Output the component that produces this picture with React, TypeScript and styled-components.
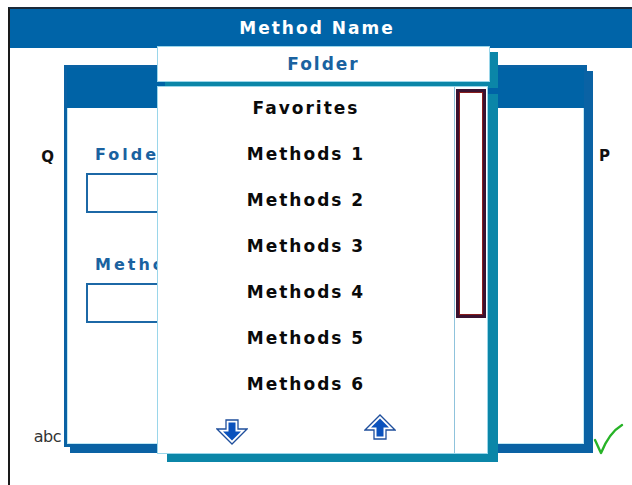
import React from 'react';
import styled, { createGlobalStyle } from 'styled-components';

const FONT = "'DejaVu Sans', Verdana, sans-serif";

const GlobalStyle = createGlobalStyle`
  html, body {
    margin: 0;
    padding: 0;
    background: #ffffff;
  }
`;

const methods = ['Favorites', 'Methods 1', 'Methods 2', 'Methods 3', 'Methods 4', 'Methods 5', 'Methods 6'];

const App: React.FC = () => {
  return (
    <Page>
      <GlobalStyle />
      <Frame>
        <TitleBar>Method Name</TitleBar>
        <Main>
          <SideColumn align="right">
            <SideKey>Q</SideKey>
            <SmallText>abc</SmallText>
          </SideColumn>

          <Dialog>
            <DialogHeader />
            <DialogBody>
              <FieldLabel>Folder</FieldLabel>
              <FieldBox />
              <FieldLabel spaced>Method</FieldLabel>
              <FieldBox />
            </DialogBody>
          </Dialog>

          <SideColumn align="left">
            <SideKey indent>P</SideKey>
            <CheckMark />
          </SideColumn>
        </Main>
      </Frame>

      <Popup>
        <PopupTitle>Folder</PopupTitle>
        <ListBox>
          <ListColumn>
            <Items>
              {methods.map((m) => (
                <Item key={m}>{m}</Item>
              ))}
            </Items>
            <ArrowRow>
              <ArrowCell drop={5}>
                <ArrowIcon direction="down" />
              </ArrowCell>
              <ArrowCell drop={0}>
                <ArrowIcon direction="up" />
              </ArrowCell>
            </ArrowRow>
          </ListColumn>
          <ScrollColumn>
            <ScrollThumb />
          </ScrollColumn>
        </ListBox>
      </Popup>
    </Page>
  );
};

const ArrowIcon: React.FC<{ direction: 'up' | 'down' }> = ({ direction }) => (
  <svg
    width="32"
    height="26"
    viewBox="0 0 32 26"
    style={{ transform: direction === 'up' ? 'scaleY(-1)' : undefined }}
  >
    <polygon
      points="10,1 22,1 22,10 31,10 16,25 1,10 10,10"
      fill="#ffffff"
      stroke="#1f4f9c"
      strokeWidth="1.3"
      strokeLinejoin="miter"
    />
    <polygon points="12.5,3.5 19.5,3.5 19.5,12.5 25,12.5 16,21.5 7,12.5 12.5,12.5" fill="#0b52bd" />
  </svg>
);

const CheckMark: React.FC = () => (
  <svg width="32" height="38" viewBox="0 0 32 38">
    <path
      d="M2 21 C4 25 6 30 8 34 C12 24 19 12 29 6"
      fill="none"
      stroke="#27b327"
      strokeWidth="2.4"
      strokeLinecap="round"
      strokeLinejoin="round"
    />
  </svg>
);

const Page = styled.div`
  position: relative;
  width: 632px;
  height: 485px;
  overflow: hidden;
  font-family: ${FONT};
`;

const Frame = styled.div`
  margin: 7px 0 0 8px;
  height: 478px;
  border-left: 2px solid #1a1a1a;
  border-top: 2px solid #1a2a3a;
  box-sizing: border-box;
  display: flex;
  flex-direction: column;
`;

const TitleBar = styled.div`
  flex-shrink: 0;
  height: 39px;
  background: #0064a8;
  color: #ffffff;
  font-size: 17px;
  font-weight: 700;
  letter-spacing: 2px;
  display: flex;
  align-items: center;
  justify-content: center;
  padding-right: 8px;
  padding-bottom: 2px;
  box-sizing: border-box;
`;

const Main = styled.div`
  flex: 1;
  display: grid;
  grid-template-columns: 52px 531px 1fr;
  align-items: start;
  padding-top: 17px;
`;

const SideColumn = styled.div<{ align: 'left' | 'right' }>`
  display: flex;
  flex-direction: column;
  justify-content: space-between;
  align-items: ${(p) => (p.align === 'left' ? 'flex-start' : 'flex-end')};
  padding: ${(p) => (p.align === 'left' ? '82px 0 0 0' : '83px 0 0 0')};
  height: ${(p) => (p.align === 'left' ? '392px' : '381px')};
  box-sizing: border-box;
`;

const SideKey = styled.div<{ indent?: boolean }>`
  font-size: 15px;
  font-weight: 700;
  color: #111;
  margin: ${(p) => (p.indent ? '0 0 0 6px' : '0 8px 0 0')};
`;

const SmallText = styled.div`
  font-size: 16px;
  color: #333;
  margin-right: 1px;
  letter-spacing: -0.5px;
`;

const Dialog = styled.div`
  height: 382px;
  width: 523px;
  margin-left: 2px;
  border: 3px solid #0a62a4;
  box-shadow: inset 0 0 0 1px #bfe8f4, 6px 6px 0 #0a62a4;
  background: #ffffff;
  box-sizing: border-box;
  display: flex;
  flex-direction: column;
`;

const DialogHeader = styled.div`
  height: 40px;
  background: #0063a6;
`;

const DialogBody = styled.div`
  flex: 1;
  padding: 37px 0 0 19px;
  display: flex;
  flex-direction: column;
  align-items: flex-start;
`;

const FieldLabel = styled.div<{ spaced?: boolean }>`
  font-size: 16px;
  font-weight: 700;
  color: #1a62a0;
  letter-spacing: 3px;
  margin: ${(p) => (p.spaced ? '42px' : '0')} 0 9px 9px;
`;

const FieldBox = styled.div`
  width: 220px;
  height: 40px;
  border: 2px solid #1c68a6;
  box-sizing: border-box;
  background: #ffffff;
`;

const Popup = styled.div`
  position: absolute;
  left: 157px;
  top: 46px;
  width: 333px;
  display: flex;
  flex-direction: column;
  gap: 4px;
`;

const PopupTitle = styled.div`
  height: 36px;
  background: #ffffff;
  border: 1px solid #9ad6ea;
  box-sizing: border-box;
  box-shadow: 8px 6px 0 #0b86a8;
  color: #1a62a0;
  font-size: 17px;
  font-weight: 700;
  letter-spacing: 2px;
  display: flex;
  align-items: center;
  justify-content: center;
`;

const ListBox = styled.div`
  width: 331px;
  height: 368px;
  background: #ffffff;
  border: 1px solid #9ad6ea;
  box-sizing: border-box;
  box-shadow: 10px 8px 0 #0b86a8;
  display: grid;
  grid-template-columns: 1fr 33px;
`;

const ListColumn = styled.div`
  display: flex;
  flex-direction: column;
`;

const Items = styled.div`
  display: flex;
  flex-direction: column;
  gap: 4px;
`;

const Item = styled.div`
  height: 42px;
  display: flex;
  align-items: center;
  justify-content: center;
  font-size: 17px;
  font-weight: 700;
  color: #0a0a0a;
  letter-spacing: 2px;
`;

const ArrowRow = styled.div`
  flex: 1;
  display: flex;
  align-items: flex-start;
  padding-top: 9px;
`;

const ArrowCell = styled.div<{ drop: number }>`
  flex: 1;
  display: flex;
  justify-content: center;
  padding-top: ${(p) => p.drop}px;
`;

const ScrollColumn = styled.div`
  border-left: 1px solid #8fc3dc;
  padding: 2px 1px 0 1px;
`;

const ScrollThumb = styled.div`
  height: 229px;
  border: 3px solid #3a1230;
  box-shadow: inset 0 0 0 1px #8a1c1c;
  box-sizing: border-box;
  background: #ffffff;
`;

export default App;
